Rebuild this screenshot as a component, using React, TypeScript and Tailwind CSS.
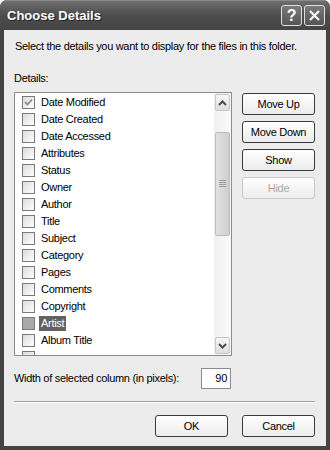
import { useState } from "react";

const details = [
  "Date Modified",
  "Date Created",
  "Date Accessed",
  "Attributes",
  "Status",
  "Owner",
  "Author",
  "Title",
  "Subject",
  "Category",
  "Pages",
  "Comments",
  "Copyright",
  "Artist",
  "Album Title",
];

function CheckBox({ checked, selected }: { checked: boolean; selected: boolean }) {
  return (
    <div
      className={
        "w-[13px] h-[13px] border border-[#7a7a7a] flex items-center justify-center shrink-0 " +
        (selected ? "bg-[#a9a9a9]" : "bg-gradient-to-br from-[#dcdcdc] to-white")
      }
    >
      {checked && (
        <svg width="9" height="9" viewBox="0 0 9 9">
          <path d="M1 4 L3.5 6.5 L8 1.5" fill="none" stroke="#8c8c8c" strokeWidth="1.8" />
        </svg>
      )}
    </div>
  );
}

function XpButton({ label, disabled, className = "" }: { label: string; disabled?: boolean; className?: string }) {
  return (
    <button
      className={
        "w-[73px] h-[22px] rounded-[3px] border text-[11px] leading-none bg-gradient-to-b from-white to-[#ececec] " +
        (disabled ? "border-[#c9c9c9] text-[#a8a8a8]" : "border-[#3a3a3a] text-black") +
        " " +
        className
      }
    >
      {label}
    </button>
  );
}

function ScrollArrow({ up }: { up: boolean }) {
  return (
    <div className="h-[17px] mx-[1px] rounded-[2px] border border-[#c8c8c8] bg-gradient-to-b from-[#f7f7f7] to-[#dedede] flex items-center justify-center">
      <svg width="9" height="6" viewBox="0 0 9 6">
        <path d={up ? "M1 5 L4.5 1.5 L8 5" : "M1 1 L4.5 4.5 L8 1"} fill="none" stroke="#4d4d4d" strokeWidth="2" />
      </svg>
    </div>
  );
}

export default function App() {
  const [checked] = useState<Record<string, boolean>>({ "Date Modified": true });
  const selected = "Artist";

  return (
    <div
      className="w-[330px] h-[450px] flex flex-col bg-white text-[11px] text-black tracking-[-0.3px]"
      style={{ fontFamily: '"Liberation Sans", Arial, sans-serif' }}
    >
      <div className="flex-1 flex flex-col rounded-t-[7px] bg-[#444] overflow-hidden">
        {/* title bar */}
        <div className="h-[30px] shrink-0 flex items-center pl-[7px] pr-[5px] bg-gradient-to-b from-[#6e6e6e] via-[#4c4c4c] to-[#454545] border-t border-[#8a8a8a]">
          <span className="text-white font-bold text-[13px] tracking-normal [text-shadow:1px_1px_0_#222]">Choose Details</span>
          <div className="ml-auto flex gap-[2px]">
            <div className="w-[21px] h-[21px] rounded-[3px] border border-[#e0e0e0] bg-gradient-to-b from-[#7a7a7a] to-[#555] flex items-center justify-center text-white font-bold text-[16px]">
              ?
            </div>
            <div className="w-[21px] h-[21px] rounded-[3px] border border-[#e0e0e0] bg-gradient-to-b from-[#7a7a7a] to-[#555] flex items-center justify-center">
              <svg width="11" height="11" viewBox="0 0 11 11">
                <path d="M1 1 L10 10 M10 1 L1 10" stroke="white" strokeWidth="2" />
              </svg>
            </div>
          </div>
        </div>

        {/* body */}
        <div className="flex-1 mx-[4px] mb-[4px] bg-[#ececec] flex flex-col pl-[10px] pr-[11px]">
          <div className="mt-[10px] pl-[1px] leading-[13px] whitespace-nowrap">
            Select the details you want to display for the files in this folder.
          </div>
          <div className="mt-[19px] leading-[13px]">Details:</div>

          <div className="mt-[7px] flex gap-[10px]">
            <div className="w-[219px] h-[264px] border border-[#8c8c8c] bg-white flex">
              <div className="flex-1 overflow-hidden pt-[1px]">
                {details.map(d => (
                  <div key={d} className="h-[17px] flex items-center pl-[7px]">
                    <CheckBox checked={!!checked[d]} selected={d === selected} />
                    <span
                      className={
                        "ml-[4px] px-[2px] leading-[15px] " +
                        (d === selected ? "bg-[#636363] text-white" : "")
                      }
                    >
                      {d}
                    </span>
                  </div>
                ))}
                <div className="h-[17px] flex items-start pl-[7px] pt-[2px]">
                  <CheckBox checked={false} selected={false} />
                </div>
              </div>
              <div className="w-[17px] py-[1px] bg-gradient-to-r from-[#f0f0f0] to-[#fafafa] flex flex-col">
                <ScrollArrow up />
                <div className="h-[21px]" />
                <div className="h-[104px] mx-[1px] rounded-[2px] border border-[#bdbdbd] bg-gradient-to-r from-[#e2e2e2] to-[#cfcfcf] flex items-center justify-center">
                  <svg width="7" height="8" viewBox="0 0 7 8">
                    <path d="M0 0.5 H7 M0 2.5 H7 M0 4.5 H7 M0 6.5 H7" stroke="#a0a0a0" strokeWidth="1" />
                  </svg>
                </div>
                <div className="flex-1" />
                <ScrollArrow up={false} />
              </div>
            </div>

            <div className="flex flex-col gap-[6px] pt-[1px]">
              <XpButton label="Move Up" />
              <XpButton label="Move Down" />
              <XpButton label="Show" />
              <XpButton label="Hide" disabled />
            </div>
          </div>

          <div className="mt-[12px] flex items-center">
            <span className="w-[187px] whitespace-nowrap">Width of selected column (in pixels):</span>
            <div className="w-[30px] h-[21px] border border-[#8c8c8c] bg-white flex items-center justify-end pr-[3px]">
              90
            </div>
          </div>

          <div className="mt-[12px] h-[1px] bg-[#a0a0a0] border-b border-white box-content" />

          <div className="mt-[12px] flex justify-end gap-[14px]">
            <XpButton label="OK" />
            <XpButton label="Cancel" />
          </div>
        </div>
      </div>
    </div>
  );
}
